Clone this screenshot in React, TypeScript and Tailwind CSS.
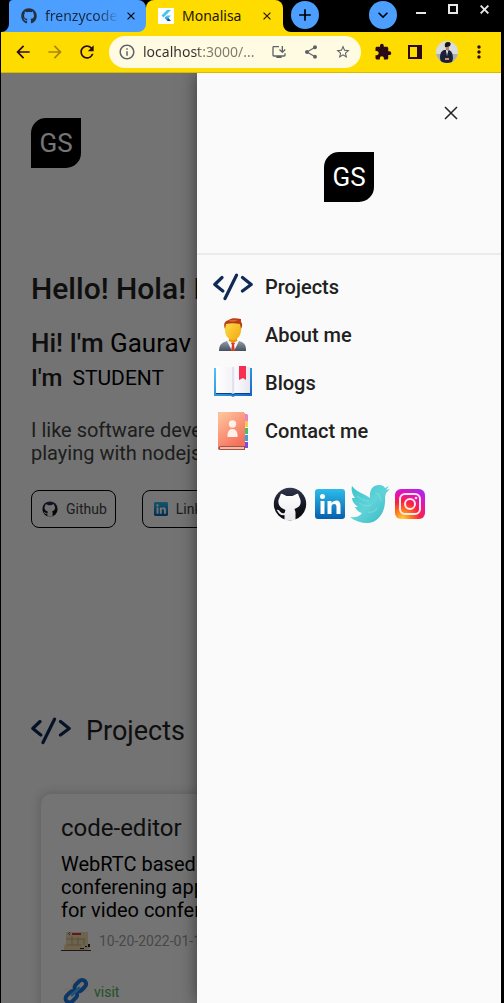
import React from "react";
import {
  MdArrowBack, MdArrowForward, MdRefresh, MdInfoOutline, MdOutlineInstallDesktop,
  MdShare, MdStarBorder, MdExtension, MdMoreVert, MdAdd, MdKeyboardArrowDown,
} from "react-icons/md";
import { FaGithub } from "react-icons/fa";

function Cross({ className }: { className: string }) {
  return (
    <svg viewBox="0 0 14 14" className={className} fill="none" stroke="currentColor">
      <path d="m1 1 12 12M13 1 1 13" />
    </svg>
  );
}

function Logo() {
  return (
    <div className="flex size-[50px] items-center justify-center rounded-tl-[15px] rounded-br-[15px] bg-black text-[26px] leading-8 text-white">
      GS
    </div>
  );
}

function CodeIcon() {
  return (
    <svg viewBox="0 0 40 28" className="h-7 w-10 shrink-0" fill="none" stroke="#0f2a55" strokeWidth="3.2" strokeLinecap="round" strokeLinejoin="round">
      <path d="M9 4.500 1.800 11.500l8 6.500M29.500 4.500l8.700 7-8.700 6.500M23.500 2.200 12 25.500" />
    </svg>
  );
}

function PersonIcon() {
  return (
    <svg viewBox="0 0 40 40" className="size-10 shrink-0">
      <defs>
        <linearGradient id="face" x1="0" y1="0" x2="1" y2="1"><stop offset="0" stopColor="#ffe24a" /><stop offset="1" stopColor="#f3a712" /></linearGradient>
        <linearGradient id="suit" x1="0" y1="0" x2="0" y2="1"><stop offset="0" stopColor="#9aa4b3" /><stop offset="1" stopColor="#474f5d" /></linearGradient>
      </defs>
      <path d="M6 36c0-6 2-8 8-10l6-1 6 1c6 2 7 4 7 10z" fill="url(#suit)" />
      <path d="m14 26 5 10h2l5-10z" fill="#f4f5f8" />
      <path d="m18 28 2-1 2 1-1 2 1 6h-4l1-6z" fill="#d93b27" />
      <path d="M16 20h8v6l-4 2-4-2z" fill="#e9970b" />
      <path d="M12 12c0-6 3-8 8-8s8 2 8 8c1 7-3 13-8 13s-9-6-8-13z" fill="url(#face)" />
      <path d="M12 14c-2-6 0-8 4-9 2-2 6-2 12-1v3c2 2 1 5 0 7l-1-5c-5-1-10-1-14 0z" fill="#b43c16" />
      <path d="M15 6q4-2 10-1-4 3-10 1z" fill="#dd6a33" />
    </svg>
  );
}

function BookIcon() {
  return (
    <svg viewBox="0 0 40 40" className="size-10 shrink-0">
      <defs>
        <linearGradient id="cover" x1="0" y1="0" x2="1" y2="1"><stop offset="0" stopColor="#4fc6f6" /><stop offset="1" stopColor="#1261c4" /></linearGradient>
        <linearGradient id="sheet"><stop offset="0" stopColor="#fff" /><stop offset=".46" stopColor="#f3f3f8" /><stop offset=".5" stopColor="#d9dae4" /><stop offset=".56" stopColor="#fafafe" /><stop offset="1" stopColor="#e7e8f0" /></linearGradient>
      </defs>
      <path d="M1 5h38v28H22l-2 1-2-1H1z" fill="url(#cover)" />
      <path d="M3 30h34v1H22l-2 1-2-1H3z" fill="#0b3f87" />
      <path d="M3 4h34v26H22l-2 1-2-1H3z" fill="url(#sheet)" />
      <path d="M26 3h7v14l-3-2-4 2z" fill="#f72d52" />
    </svg>
  );
}

function ContactIcon() {
  return (
    <svg viewBox="0 0 40 40" className="size-10 shrink-0">
      <defs>
        <linearGradient id="binder" x1="0" y1="0" x2="0.600" y2="1"><stop offset="0" stopColor="#ffc9a0" /><stop offset="1" stopColor="#f5705b" /></linearGradient>
      </defs>
      <path d="M30 3h4l1 1v6h-5z" fill="#ee7fd0" />
      <path d="M30 10h5v6h-5z" fill="#f4cf4c" />
      <path d="M30 17h5v6h-5z" fill="#49bd63" />
      <path d="M30 24h5v6h-5z" fill="#3b9fe6" />
      <path d="M30 31h5v6h-5z" fill="#7c4be0" />
      <path d="M5 3q0-2 2-2h23l2 2v36H7q-2 0-2-2z" fill="#b84a3a" />
      <path d="M7 36h24v2H7z" fill="#dcc3b4" />
      <path d="M5 3q0-2 2-2h23l2 2v32H7l-2 2z" fill="url(#binder)" />
      <circle cx="19.500" cy="13" r="3.700" fill="#fff0e9" />
      <path d="M14.500 26v-3q1-5 5-5t5 5v3z" fill="#fff0e9" />
    </svg>
  );
}

function GithubBadge({ className }: { className: string }) {
  return (
    <svg viewBox="0 0 34 34" className={className}>
      <defs>
        <linearGradient id="night" x1="0" y1="0" x2="0" y2="1"><stop offset="0" stopColor="#30364e" /><stop offset=".6" stopColor="#12131c" /><stop offset="1" stopColor="#08080b" /></linearGradient>
        <linearGradient id="cat" x1="0" y1="0" x2="0" y2="1"><stop offset="0" stopColor="#fff" /><stop offset="1" stopColor="#e8e9ed" /></linearGradient>
      </defs>
      <circle cx="17" cy="17" r="16.200" fill="url(#night)" />
      <path d="M7.500 8q0-2 2-1l4 2h6l4-2q2-1 2 1l2 5q1 6-4 8l-2 1 1 3v8h-11v-5q-5 1-7-4l-1-1q2-1 4 2 2 2 4 1l1-3-2-1q-6-3-5-9z" fill="url(#cat)" />
    </svg>
  );
}

function LinkedinBadge({ className }: { className: string }) {
  return (
    <svg viewBox="0 0 30 30" className={className}>
      <defs>
        <linearGradient id="sky" x1="0" y1="0" x2="0" y2="1"><stop offset="0" stopColor="#2cbcea" /><stop offset="1" stopColor="#075fae" /></linearGradient>
      </defs>
      <rect width="30" height="30" rx="3" fill="url(#sky)" />
      <g fill="#fff">
        <circle cx="7.500" cy="7.500" r="2.500" />
        <path d="M5.500 12h4v13h-4zM12.500 12h4v2q1.500-2.500 5-2.500 4 0 4 5.500v8h-4v-7q0-3-2.300-3-2.700 0-2.700 3v7h-4z" />
      </g>
    </svg>
  );
}

function TwitterBadge() {
  return (
    <svg viewBox="0 0 40 40" className="size-10">
      <defs>
        <linearGradient id="felt" x1="0" y1="0" x2="1" y2="1"><stop offset="0" stopColor="#3cc4cd" /><stop offset=".5" stopColor="#5fd3d8" /><stop offset="1" stopColor="#36b5c0" /></linearGradient>
      </defs>
      <path d="M2 2c3 4 7 6 11 8 3 1 5 3 7 4-1-8 3-13 9-13 3 0 5 1 6 3l4-2-3 4 4-1-4 4-1 4c1 14-6 26-18 26-6 0-12-2-17-6 5 1 9 0 12-4-4-1-6-4-7-6h3c-4-3-6-6-6-9h3C2 10 1 6 2 2z" fill="url(#felt)" />
      <path d="M7 12q6 5 12 5M9 19q6 4 12 2M26 9q5 3 5 8M18 28q6 1 9-4" fill="none" stroke="#83e0e2" strokeWidth="1.500" opacity=".5" />
    </svg>
  );
}

function InstagramBadge() {
  return (
    <svg viewBox="0 0 30 30" className="size-[30px]">
      <defs>
        <radialGradient id="sunset" cx=".25" cy="1" r="1.150"><stop offset="0" stopColor="#ffd43b" /><stop offset=".25" stopColor="#ff7a1a" /><stop offset=".5" stopColor="#f8233f" /><stop offset=".75" stopColor="#e313b5" /><stop offset="1" stopColor="#a52af5" /></radialGradient>
      </defs>
      <rect width="30" height="30" rx="6" fill="url(#sunset)" />
      <g fill="none" stroke="#ffe9f3" strokeWidth="2">
        <rect x="5" y="5" width="20" height="20" rx="5" />
        <circle cx="15" cy="15" r="5" />
      </g>
      <circle cx="21" cy="9" r="1.300" fill="#ffe9f3" />
    </svg>
  );
}

function CalendarIcon() {
  return (
    <svg viewBox="0 0 30 20" className="h-5 w-[30px] shrink-0">
      <path d="M5 1h22v12l2 4-3 2H3v-4l2-3z" fill="#ecd9ac" />
      <path d="M11 2h9v2h-9z" fill="#e0303b" />
      <path d="M9 1q-3 2 0 3" stroke="#276b9f" fill="none" />
      <path d="M5 8h19M11 5v9M17 6v8M23 8v6M6 14h14" stroke="#c9aa75" fill="none" />
      <path d="M27 13h2v3h-2zM19 17h4v1h-4zM24 15h2v1h-2z" fill="#24201c" />
      <path d="M0 19h30v1H0z" fill="#522f25" />
    </svg>
  );
}

function LinkIcon() {
  return (
    <svg viewBox="0 0 30 30" className="size-[30px] shrink-0">
      <path d="M12 1h14l1 5-2 5 3 4H14l-4 6-8-1 3-4-3-5h7z" fill="#ffe9b8" opacity=".35" />
      <g fill="none" stroke="#1877e0" strokeWidth="4">
        <rect x="-6" y="-4" width="13" height="8" rx="4" transform="translate(19 9) rotate(-45)" />
        <rect x="-6" y="-4" width="13" height="8" rx="4" transform="translate(10 20) rotate(-45)" />
      </g>
      <path d="m11 18 7-7" stroke="#52b3ff" strokeWidth="3" strokeLinecap="round" />
    </svg>
  );
}

function FlutterIcon() {
  return (
    <svg viewBox="0 0 16 16" className="size-4 shrink-0">
      <path d="M0 0h16v16H0z" fill="#fff" />
      <path d="M9 2h4L5.500 9.500l-2-2z" fill="#45c3f5" />
      <path d="M9 7.500h4L10.500 10l-2-2z" fill="#45c3f5" />
      <path d="m6.500 10 2-2 2 2-2 2z" fill="#29a4e6" />
      <path d="m8.500 12 2-2L13 13H9.500z" fill="#0b4d8f" />
    </svg>
  );
}

function Avatar() {
  return (
    <svg viewBox="0 0 22 22" className="size-[22px]">
      <clipPath id="round"><circle cx="11" cy="11" r="11" /></clipPath>
      <g clipPath="url(#round)">
        <path d="M0 0h22v22H0z" fill="#d9dcdf" />
        <path d="M0 13h22v9H0z" fill="#aab0aa" />
        <path d="M5 22l-1-5q0-7 4-8h5q4 2 4 8l-1 5z" fill="#1b2238" />
        <path d="M9 4h4v5l-2 3-1-3z" fill="#b98767" />
        <path d="M9 6q-1-5 3-5t2 4l-3 1z" fill="#15151c" />
        <path d="m10 9 1 6 1-5z" fill="#eef" />
        <path d="M9 17h4v2H9z" fill="#c59476" />
      </g>
    </svg>
  );
}

function BrowserChrome() {
  return (
    <header className="shrink-0 font-['Noto_Sans',sans-serif]">
      <div className="flex h-8 bg-black">
        <div className="flex min-w-0 flex-1">
          <div className="w-2 shrink-0 bg-[#4d9fff]"><div className="h-full rounded-br-lg bg-black" /></div>
          <div className="w-[137px] shrink-0 rounded-tr-lg bg-linear-to-b from-black from-50% to-[#ffdc00] to-50%">
            <div className="flex h-full items-center rounded-r-lg rounded-tl-sm bg-[#4d9fff] pr-2 pl-3">
              <FaGithub className="size-4 shrink-0 text-[#24303f]" />
              <span className="ml-2 w-[74px] overflow-hidden bg-linear-to-r from-[#16283e] from-70% to-[#4d9fff] bg-clip-text text-[14px] leading-5 whitespace-nowrap text-transparent">frenzycode</span>
              <button aria-label="Close frenzycode tab" className="ml-2"><Cross className="size-2 stroke-2 text-black" /></button>
            </div>
          </div>
          <div className="flex w-[137px] shrink-0 items-center rounded-t-lg bg-[#ffdc00] pr-3 pl-3">
            <FlutterIcon />
            <span className="ml-2 flex-1 text-[14px] leading-5 text-[#241500]">Monalisa</span>
            <button aria-label="Close Monalisa tab"><Cross className="size-2 stroke-2 text-[#241500]" /></button>
          </div>
          <div className="w-2 shrink-0 bg-[#ffdc00]"><div className="h-full rounded-bl-lg bg-black" /></div>
          <button aria-label="New tab" className="mt-px flex size-7 items-center justify-center rounded-full bg-[#4d9fff]"><MdAdd className="size-5" /></button>
        </div>
        <button aria-label="Search tabs" className="mt-px mr-4 flex size-7 items-center justify-center rounded-full bg-[#4d9fff]"><MdKeyboardArrowDown className="size-5" /></button>
        <div className="flex h-[18px] w-[88px] items-center justify-between pr-3 pl-[3px] text-[#e8e8e8]">
          <button aria-label="Minimize" className="flex h-[10px] items-end"><span className="block h-[2px] w-[10px] bg-[#e8e8e8]" /></button>
          <button aria-label="Maximize" className="size-[10px] border-2 border-[#e8e8e8]" />
          <button aria-label="Close window"><Cross className="size-[9px] stroke-[3px]" /></button>
        </div>
      </div>
      <div className="flex h-[41px] items-center border-b border-[#d8ba00] bg-[#ffdc00] text-[#2b0a18]">
        <div className="flex w-[108px] shrink-0 items-center gap-3 pl-3">
          <button aria-label="Back"><MdArrowBack className="size-5" /></button>
          <button aria-label="Forward"><MdArrowForward className="size-5 opacity-40" /></button>
          <button aria-label="Reload"><MdRefresh className="size-5" /></button>
        </div>
        <div className="flex h-8 min-w-0 flex-1 items-center rounded-full bg-[#fffbe3] pr-[10px] pl-[9px] text-[#5f6368]">
          <MdInfoOutline className="size-[18px] shrink-0" />
          <input aria-label="Address" readOnly value="localhost:3000/..." className="ml-[7px] w-[120px] min-w-0 flex-1 bg-linear-to-r from-[#33302e] from-[56px] to-[#7b7a6c] to-[56px] bg-clip-text text-[14px] leading-5 text-transparent outline-none" />
          <div className="flex gap-4">
            <button aria-label="Install app"><MdOutlineInstallDesktop className="size-4" /></button>
            <button aria-label="Share"><MdShare className="size-4" /></button>
            <button aria-label="Bookmark"><MdStarBorder className="size-4" /></button>
          </div>
        </div>
        <div className="flex w-[140px] shrink-0 items-center pl-[6px]">
          <button aria-label="Extensions" className="flex w-8 justify-center"><MdExtension className="size-[18px]" /></button>
          <button aria-label="Side panel" className="flex w-8 justify-center"><span className="block size-[14px] border-2 border-r-[5px] border-[#2b0a18]" /></button>
          <button aria-label="Profile" className="flex w-8 justify-center"><Avatar /></button>
          <button aria-label="More" className="flex w-8 justify-center"><MdMoreVert className="size-5" /></button>
        </div>
      </div>
    </header>
  );
}

function HomePage() {
  return (
    <main className="px-[30px] pt-[45px] whitespace-nowrap text-[#212121]">
      <Logo />
      <h1 className="mt-[103px] text-[30px] leading-9 font-medium">Hello! Hola! Hi!</h1>
      <h2 className="mt-5 text-[26px] leading-8 text-black"><span className="font-medium text-[#212121]">Hi! I'm</span> Gaurav</h2>
      <p className="mt-[5px] flex items-center gap-[10px] text-[21px] leading-7 text-black"><span className="text-[24px] font-medium text-[#212121]">I'm</span>STUDENT</p>
      <p className="mt-[27px] text-[20px] leading-[23px] text-[#424242]">I like software develop<br />playing with nodejs</p>
      <div className="mt-[25px] flex gap-[26px] text-[14px] leading-5 text-[#424242]">
        <a href="#github" className="flex h-[38px] items-center gap-2 rounded-lg border border-black pr-2 pl-[10px]"><GithubBadge className="size-4" />Github</a>
        <a href="#linkedin" className="flex h-[38px] items-center gap-2 rounded-lg border border-black px-[11px]"><LinkedinBadge className="size-[14px]" />Linkedin</a>
      </div>
      <h2 className="mt-[187px] flex items-center gap-[15px] text-[27px] leading-8"><CodeIcon />Projects</h2>
      <article className="mx-[10px] mt-[47px] rounded-[10px] bg-[#fdfdfd] p-5 shadow-[0_0_10px_2px_#d5d5d5]">
        <h3 className="text-[24px] leading-7">code-editor</h3>
        <p className="mt-[11px] text-[20px] leading-[23px] text-black">WebRTC based video<br />conferening app<br />for video conference</p>
        <p className="mt-[9px] flex items-center gap-2 text-[14px] leading-5 text-[#9e9e9e]"><CalendarIcon />10-20-2022-01-10</p>
        <a href="#visit" className="mt-[26px] flex items-center gap-[3px] text-[14px] leading-5 text-[#4caf50]"><LinkIcon />visit</a>
      </article>
    </main>
  );
}

const menu = [
  { label: "Projects", icon: <CodeIcon /> },
  { label: "About me", icon: <PersonIcon /> },
  { label: "Blogs", icon: <BookIcon /> },
  { label: "Contact me", icon: <ContactIcon /> },
];

function Drawer() {
  return (
    <aside className="absolute inset-y-0 right-0 w-[304px] bg-[#fafafa] text-[#212121] shadow-[0_0_16px_rgba(0,0,0,0.5)]">
      <div className="flex flex-col items-center border-b-2 border-[#ebebeb] pt-[28px] pb-[51px]">
        <button aria-label="Close menu" className="mr-[38px] flex size-6 items-center justify-center self-end"><Cross className="size-[14px] stroke-[1.5px]" /></button>
        <div className="mt-[27px]"><Logo /></div>
      </div>
      <nav className="pt-2">
        {menu.map(({ label, icon }) => (
          <a key={label} href="#" className="flex h-12 items-center gap-3 px-4 text-[20px] leading-6 font-medium">{icon}{label}</a>
        ))}
      </nav>
      <div className="mt-[29px] flex items-center justify-center gap-[5px]">
        <a href="#github" aria-label="Github" className="mr-[3px]"><GithubBadge className="size-[34px]" /></a>
        <a href="#linkedin" aria-label="Linkedin"><LinkedinBadge className="size-[30px]" /></a>
        <a href="#twitter" aria-label="Twitter"><TwitterBadge /></a>
        <a href="#instagram" aria-label="Instagram"><InstagramBadge /></a>
      </div>
    </aside>
  );
}

export default function App() {
  return (
    <div className="flex h-screen flex-col overflow-hidden border-r-[3px] border-l border-black bg-[#fafafa] font-[Roboto,sans-serif]">
      <BrowserChrome />
      <div className="relative min-h-0 flex-1 overflow-hidden">
        <HomePage />
        <div className="absolute inset-0 bg-black/54" />
        <Drawer />
      </div>
    </div>
  );
}
